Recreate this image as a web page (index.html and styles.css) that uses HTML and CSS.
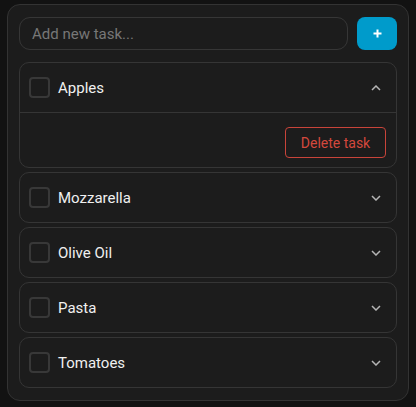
FILE: index.html
```html
<!DOCTYPE html>
<html lang="en">

<head>
    <meta charset="UTF-8">
    <meta name="viewport" content="width=device-width, initial-scale=1.0">
    <title>Tasks</title>
    <link rel="stylesheet" href="styles.css">
</head>

<body>
    <div class="panel">
        <form class="new-task">
            <input type="text" class="task-input" placeholder="Add new task...">
            <button type="button" class="add-btn">
                <svg width="9" height="9" viewBox="0 0 9 9"><path d="M4.5 0.5v8M0.5 4.5h8" stroke="#fff" stroke-width="2"/></svg>
            </button>
        </form>

        <div class="task-list">
            <div class="task open">
                <div class="task-head">
                    <span class="check"></span>
                    <span class="task-name">Apples</span>
                    <svg class="chevron" width="10" height="6" viewBox="0 0 10 6"><path d="M1 5l4-4 4 4" fill="none" stroke="#b5b5b5" stroke-width="1.5"/></svg>
                </div>
                <div class="task-body">
                    <button type="button" class="delete-btn">Delete task</button>
                </div>
            </div>
            <div class="task">
                <div class="task-head">
                    <span class="check"></span>
                    <span class="task-name">Mozzarella</span>
                    <svg class="chevron" width="10" height="6" viewBox="0 0 10 6"><path d="M1 1l4 4 4-4" fill="none" stroke="#b5b5b5" stroke-width="1.5"/></svg>
                </div>
            </div>
            <div class="task">
                <div class="task-head">
                    <span class="check"></span>
                    <span class="task-name">Olive Oil</span>
                    <svg class="chevron" width="10" height="6" viewBox="0 0 10 6"><path d="M1 1l4 4 4-4" fill="none" stroke="#b5b5b5" stroke-width="1.5"/></svg>
                </div>
            </div>
            <div class="task">
                <div class="task-head">
                    <span class="check"></span>
                    <span class="task-name">Pasta</span>
                    <svg class="chevron" width="10" height="6" viewBox="0 0 10 6"><path d="M1 1l4 4 4-4" fill="none" stroke="#b5b5b5" stroke-width="1.5"/></svg>
                </div>
            </div>
            <div class="task">
                <div class="task-head">
                    <span class="check"></span>
                    <span class="task-name">Tomatoes</span>
                    <svg class="chevron" width="10" height="6" viewBox="0 0 10 6"><path d="M1 1l4 4 4-4" fill="none" stroke="#b5b5b5" stroke-width="1.5"/></svg>
                </div>
            </div>
        </div>
    </div>
</body>

</html>
```

FILE: styles.css
```css
body {
    font-family: Roboto, "Liberation Sans", sans-serif;
    background-color: #121212;
    color: #f0f0f0;
    margin: 0;
    padding: 4px 7px 0;
}

.panel {
    width: 402px;
    box-sizing: border-box;
    background-color: #1c1c1c;
    border: 1px solid #333;
    border-radius: 13px;
    padding: 12px 11px 12px;
}

.new-task {
    display: flex;
    gap: 9px;
    margin: 0 0 12px;
}

.task-input {
    flex: 1;
    height: 33px;
    box-sizing: border-box;
    background-color: #1c1c1c;
    border: 1px solid #363636;
    border-radius: 11px;
    padding: 0 12px;
    font-family: inherit;
    font-size: 15px;
    color: #eee;
    outline: none;
}

.task-input::placeholder {
    color: #777;
}

.add-btn {
    width: 40px;
    height: 33px;
    border: none;
    border-radius: 8px;
    background-color: #009bcb;
    display: flex;
    align-items: center;
    justify-content: center;
    padding: 0;
    cursor: pointer;
}

.task-list {
    display: flex;
    flex-direction: column;
    gap: 4px;
}

.task {
    border: 1px solid #353535;
    border-radius: 10px;
}

.task-head {
    height: 49px;
    display: flex;
    align-items: center;
    padding: 0 15px 0 9px;
}

.open .task-head {
    border-bottom: 1px solid #353535;
    height: 49px;
}

.check {
    width: 21px;
    height: 21px;
    box-sizing: border-box;
    border: 2px solid #383838;
    border-radius: 4px;
    margin-right: 8px;
}

.task-name {
    flex: 1;
    font-size: 15px;
    color: #f0f0f0;
}

.task-body {
    display: flex;
    justify-content: flex-end;
    padding: 14px 10px 9px;
}

.delete-btn {
    width: 101px;
    height: 31px;
    background: none;
    border: 1px solid #c8443a;
    border-radius: 4px;
    color: #d4483d;
    font-family: inherit;
    font-size: 14px;
    cursor: pointer;
}
```
